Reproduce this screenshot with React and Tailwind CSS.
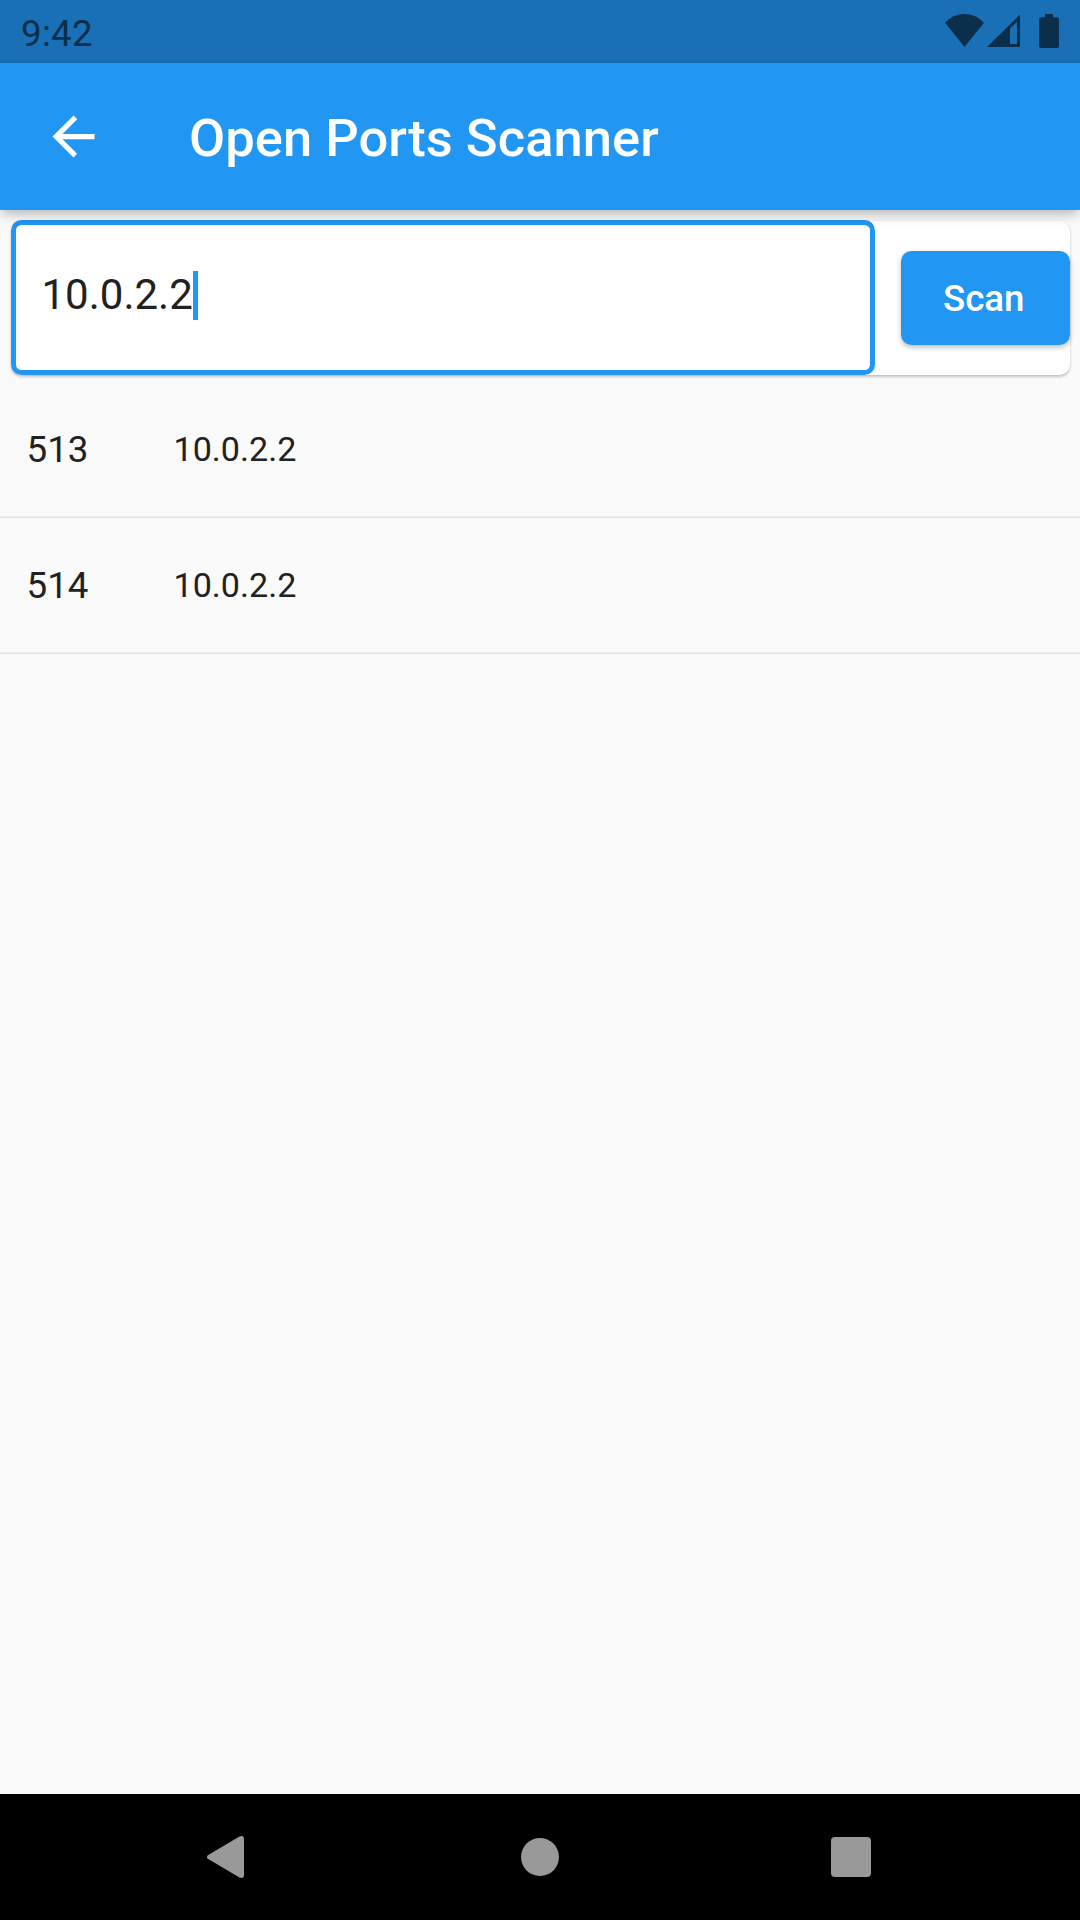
const ports = [
  { port: 513, host: "10.0.2.2" },
  { port: 514, host: "10.0.2.2" },
];

function StatusBar() {
  return (
    <div className="flex h-[63px] shrink-0 items-center justify-between bg-[#1a70b7] pl-[21px] text-[#0b2e4a]">
      <span className="pt-[3px] text-[36.75px] leading-[43px] tracking-[0.25px]">9:42</span>
      <svg className="h-[63px] w-[160px]" viewBox="920 0 160 63" fill="currentColor">
        <path d="M964.5 47 L945 22.8 Q953 14 964.5 14 Q976 14 984 22.8 Z" />
        <path fillRule="evenodd" d="M987 47 L1020 14.5 V47 Z M1010 28.5 V44 H1017 V22 Z" />
        <path d="M1045 14 H1053 V17.3 H1057 Q1059 17.3 1059 19.3 V46 Q1059 48 1057 48 H1041 Q1039 48 1039 46 V19.3 Q1039 17.3 1041 17.3 H1045 Z" />
      </svg>
    </div>
  );
}

function AppBar() {
  return (
    <header className="relative z-10 flex h-[147px] shrink-0 items-center bg-[#2196f3] pl-[42px] text-white shadow-[0_5px_10px_-2px_rgba(0,0,0,0.2),0_8px_13px_rgba(0,0,0,0.06),0_2px_20px_rgba(0,0,0,0.04)]">
      <svg className="size-[63px]" viewBox="0 0 24 24" fill="currentColor">
        <path d="M20 11H7.83l5.59-5.59L12 4l-8 8 8 8 1.41-1.41L7.83 13H20v-2z" />
      </svg>
      <h1 className="ml-[84px] pt-[2px] text-[52.5px] leading-[62px] font-medium tracking-[0.04px]">Open Ports Scanner</h1>
    </header>
  );
}

function ScanForm() {
  return (
    <div className="mx-[10.5px] mt-[10.5px] flex h-[154.5px] shrink-0 items-center justify-between rounded-[10.5px] bg-white shadow-[0_1.5px_3px_rgba(0,0,0,0.2),0_1px_2px_rgba(0,0,0,0.06)]">
      <div className="flex h-[155px] w-[864.5px] items-center rounded-[10.5px] border-[5.25px] border-[#2196f3] pb-[5px] pl-[26px]">
        <span className="pb-[2px] text-[42px] leading-[49px] text-[#212121]">10.0.2.2</span>
        <span className="h-[49px] w-[5px] bg-[#2196f3]" />
      </div>
      <button className="h-[94.5px] w-[168.5px] rounded-[10.5px] bg-[#2196f3] pt-[2px] pr-[3px] text-[36.75px] leading-[43px] font-medium tracking-[-0.1px] text-white shadow-[0_3px_5px_rgba(0,0,0,0.18),0_1px_6px_rgba(0,0,0,0.08)]">
        Scan
      </button>
    </div>
  );
}

function PortRow({ port, host }) {
  return (
    <li className="flex h-[136px] items-center border-b border-[#e0e0e0] pb-px pl-[26.5px] text-[#212121] shadow-[inset_0_-1px_0_#f0f0f0]">
      <span className="w-[147px] text-[36.75px] leading-[43px]">{port}</span>
      <span className="text-[34.125px] leading-[43px]">{host}</span>
    </li>
  );
}

function NavigationBar() {
  return (
    <nav className="flex h-[126px] shrink-0 items-center justify-between bg-black pr-[209px] pl-[206px] text-[#999]">
      <svg className="h-[42px] w-[38px]" viewBox="0 0 38 42" fill="currentColor">
        <path d="M1.8 19.2 L33.5 0.5 Q38 -1 38 3 V39 Q38 43 33.5 41.5 L1.8 22.8 Q0 21 1.8 19.2 Z" />
      </svg>
      <span className="ml-[5px] size-[38px] rounded-full bg-[#999]" />
      <span className="size-[40px] rounded-[4px] bg-[#999]" />
    </nav>
  );
}

export default function App() {
  return (
    <div className="flex h-[1920px] w-[1080px] flex-col overflow-hidden bg-[#fafafa] font-[Roboto,sans-serif]">
      <StatusBar />
      <AppBar />
      <ScanForm />
      <ul className="mt-[7px] flex-1">
        {ports.map((entry) => (
          <PortRow key={entry.port} {...entry} />
        ))}
      </ul>
      <NavigationBar />
    </div>
  );
}
